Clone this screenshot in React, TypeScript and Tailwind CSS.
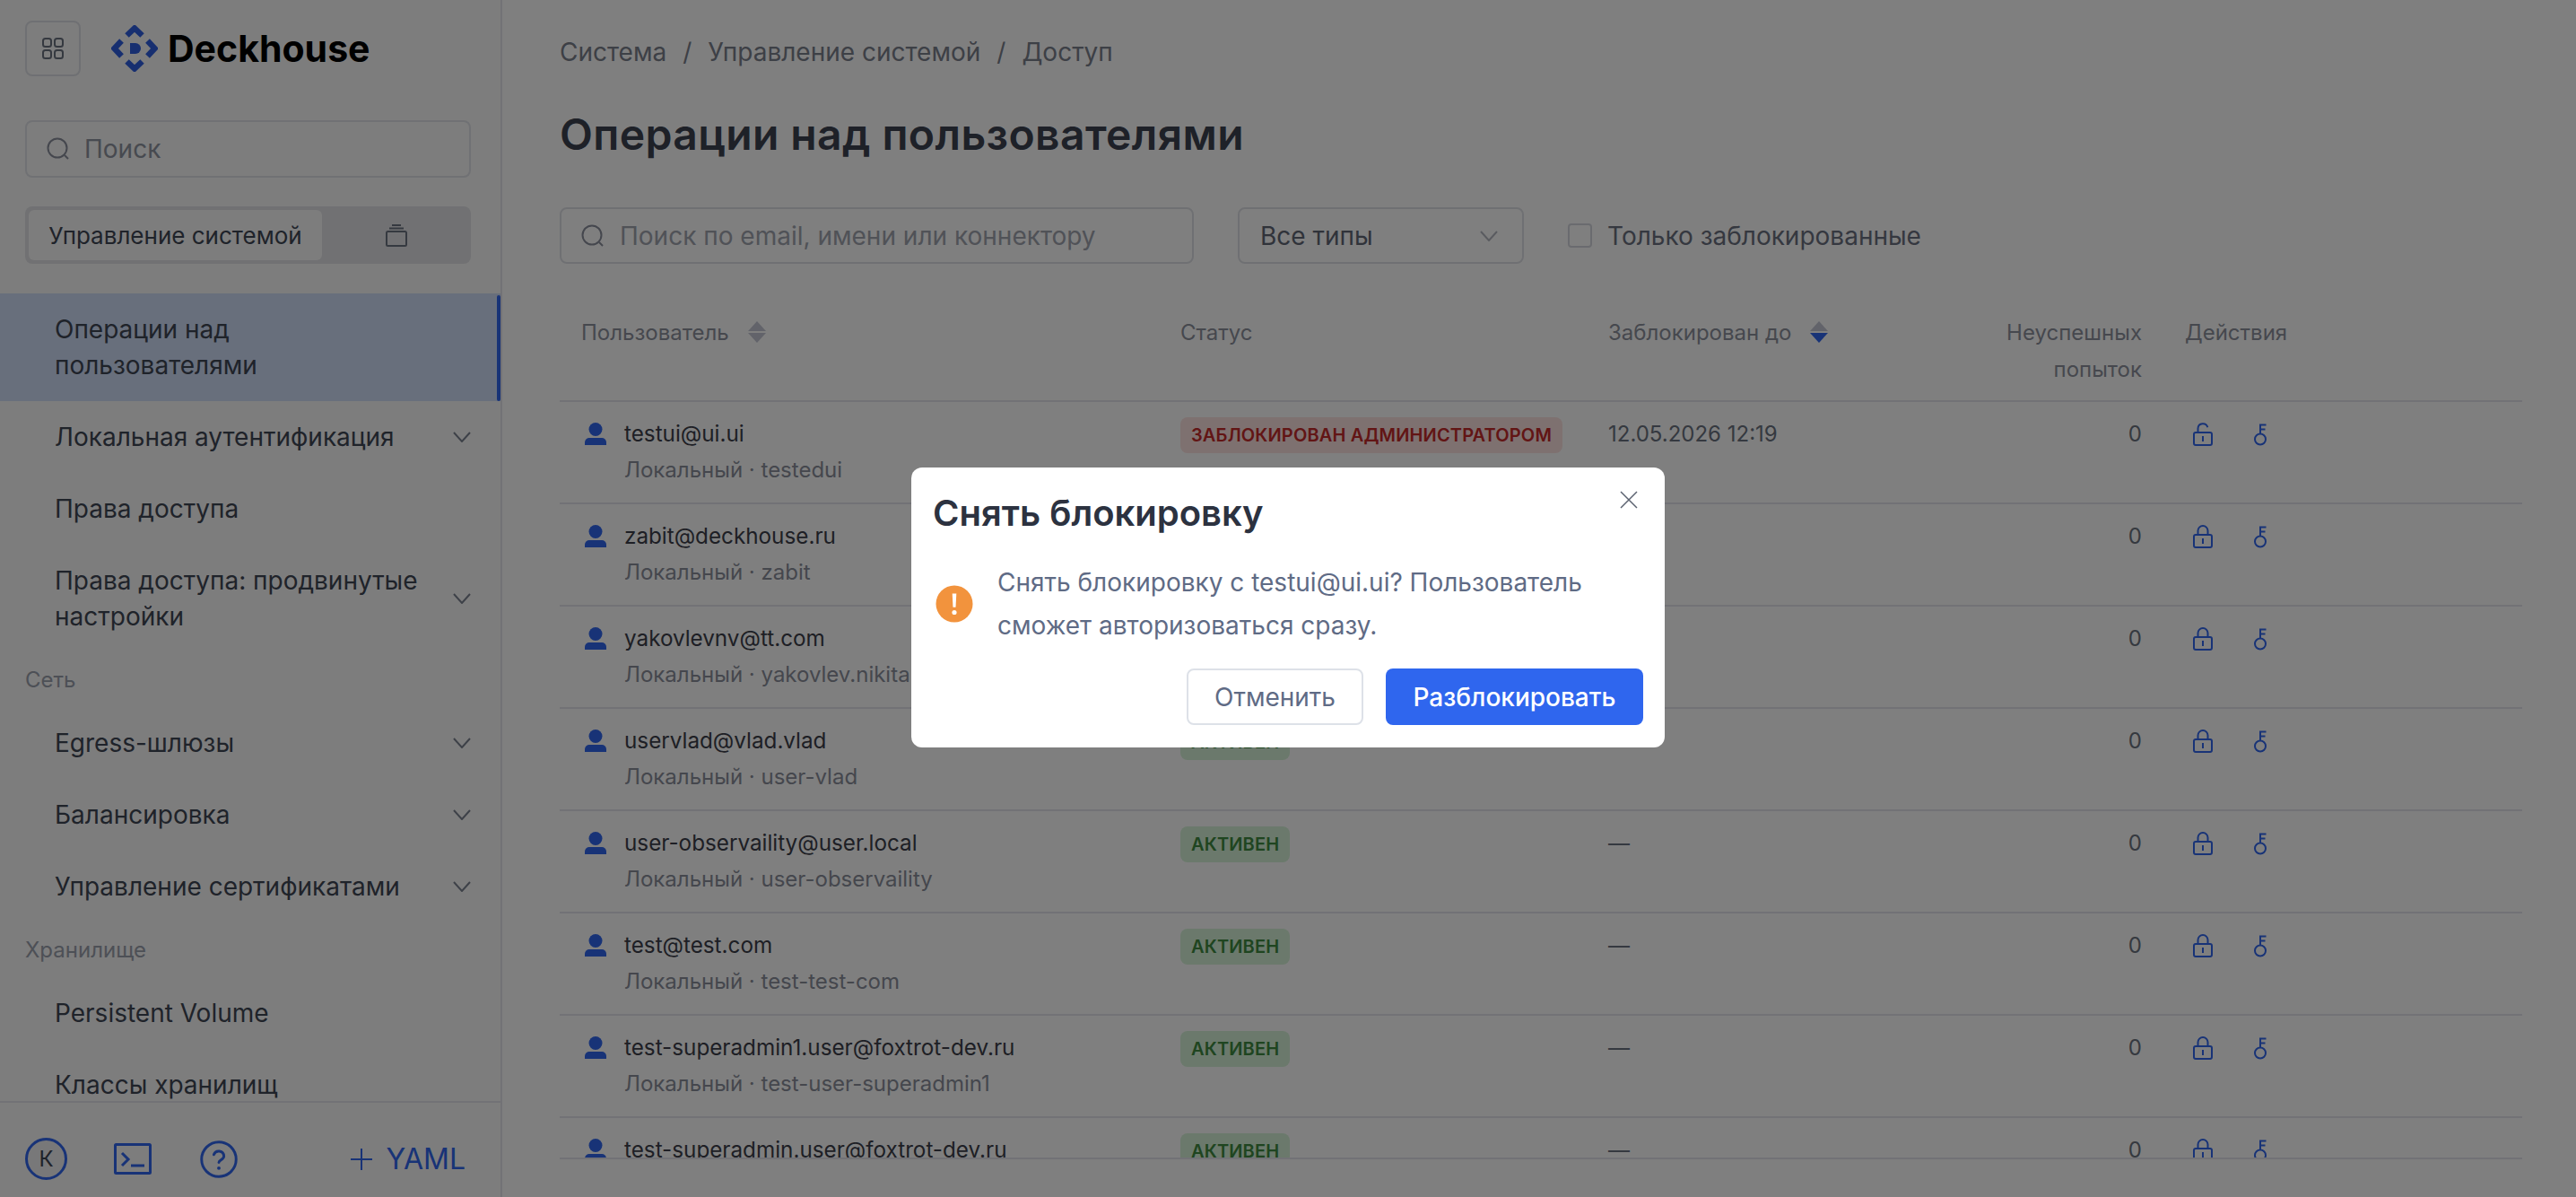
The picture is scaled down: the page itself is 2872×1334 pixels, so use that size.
import React from 'react'

const navItemClass = "flex items-center justify-between pl-[61px] pr-[33px] py-5 text-[28px] leading-[40px] text-[#3f4654]"

const Chevron = ({ className = "" }: { className?: string }) => (
  <svg width="20" height="12" viewBox="0 0 20 12" fill="none" stroke="currentColor" strokeWidth="2" className={className}>
    <path d="M1 1l9 10 9-10" />
  </svg>
)

const SearchIcon = () => (
  <svg width="26" height="26" viewBox="0 0 26 26" fill="none" stroke="#8a8f9c" strokeWidth="2" className="shrink-0">
    <circle cx="12" cy="12" r="10.5" />
    <path d="M20 20l4 4" />
  </svg>
)

const Logo = () => (
  <svg width="52" height="52" viewBox="0 0 52 52" fill="none" className="shrink-0">
    <g stroke="#2f5fe0" strokeWidth="6.5">
      <path d="M17.5 11.5L26 3.5l8.5 8" />
      <path d="M17.5 40.5L26 48.5l8.5-8" />
      <path d="M11.5 17.5L3.5 26l8 8.5" />
      <path d="M40.5 17.5L48.5 26l-8 8.5" />
    </g>
    <path d="M21 20h6a6 6 0 0 1 0 12h-6z" fill="#2f5fe0" />
  </svg>
)

const NavChild = ({ children, arrow }: { children: React.ReactNode; arrow?: boolean }) => (
  <div className={navItemClass}>
    <span>{children}</span>
    {arrow && <Chevron className="shrink-0 text-[#7b8290]" />}
  </div>
)

const Section = ({ children }: { children: React.ReactNode }) => (
  <div className="h-[61px] pl-[28px] flex items-center text-[24px] text-[#9aa0ad]">{children}</div>
)

const Sidebar = () => (
  <aside className="w-[560px] shrink-0 h-full flex flex-col bg-[#fafafa] border-r-2 border-[#e4e5ec]">
    <div className="flex items-center pl-[28px] pt-[23px]">
      <div className="w-[62px] h-[62px] rounded-lg border-2 border-[#dfe1e6] flex items-center justify-center">
        <svg width="24" height="24" viewBox="0 0 24 24" fill="none" stroke="#6b7280" strokeWidth="2">
          <rect x="1" y="1" width="9" height="9" rx="2.5" />
          <rect x="14" y="1" width="9" height="9" rx="2.5" />
          <rect x="1" y="14" width="9" height="9" rx="2.5" />
          <rect x="14" y="14" width="9" height="9" rx="2.5" />
        </svg>
      </div>
      <div className="ml-[34px] flex items-center gap-[11px]">
        <Logo />
        <span className="text-[41px] leading-none font-bold text-black">Deckhouse</span>
      </div>
    </div>
    <div className="ml-[28px] mr-[33px] mt-[49px] h-[64px] rounded-lg border-2 border-[#e0e2e8] flex items-center pl-[22px] gap-[16px] text-[28px] text-[#8f94a0]">
      <SearchIcon />
      <span>Поиск</span>
    </div>
    <div className="ml-[28px] mr-[33px] mt-[32px] h-[64px] rounded-lg bg-[#e2e3e6] flex items-center pl-[4px]">
      <div className="w-[327px] h-[56px] rounded-md bg-[#fafafa] flex items-center justify-center text-[26px] text-[#3f4654]">Управление системой</div>
      <div className="flex-1 flex items-center justify-center">
        <svg width="24" height="26" viewBox="0 0 24 26" fill="none" stroke="#6b7280" strokeWidth="2">
          <rect x="1" y="9" width="22" height="16" rx="1.5" />
          <path d="M4 5.5h16M7 2h10" />
        </svg>
      </div>
    </div>
    <div className="mt-[33px] flex-1 min-h-0 overflow-hidden">
      <div className="relative bg-[#d0def9] pl-[61px] pr-[30px] py-5 text-[28px] leading-[40px] text-[#3f4654]">
        Операции над<br />пользователями
        <div className="absolute right-0 top-[2px] bottom-0 w-[4px] rounded-sm bg-[#3066ee]" />
      </div>
      <NavChild arrow>Локальная аутентификация</NavChild>
      <NavChild>Права доступа</NavChild>
      <NavChild arrow>Права доступа: продвинутые<br />настройки</NavChild>
      <Section>Сеть</Section>
      <NavChild arrow>Egress-шлюзы</NavChild>
      <NavChild arrow>Балансировка</NavChild>
      <NavChild arrow>Управление сертификатами</NavChild>
      <Section>Хранилище</Section>
      <NavChild>Persistent Volume</NavChild>
      <NavChild>Классы хранилищ</NavChild>
    </div>
    <div className="h-[107px] shrink-0 border-t-2 border-[#e4e5ec] flex items-center pl-[28px] pr-[39px] pt-[20px]">
      <div className="w-[47px] h-[47px] rounded-full border-[3px] border-[#3066ee] bg-[#f0f0f3] flex items-center justify-center text-[24px] text-[#3f4654]">К</div>
      <svg width="42" height="35" viewBox="0 0 42 35" fill="none" stroke="#3066ee" strokeWidth="3" className="ml-[52px]">
        <rect x="1.5" y="1.5" width="39" height="32" rx="1" />
        <path d="M9 11l7 7-7 7M19 25h15" />
      </svg>
      <svg width="42" height="42" viewBox="0 0 24 24" fill="none" stroke="#3066ee" strokeWidth="1.7" strokeLinecap="round" className="ml-[54px]">
        <circle cx="12" cy="12" r="11" />
        <path d="M8.8 9a3.3 3.3 0 0 1 6.4 1c0 2.2-3.2 2.600-3.2 4" />
        <path d="M12 17.6h.01" strokeWidth="2.2" />
      </svg>
      <div className="ml-auto flex items-center gap-[15px] text-[32px] text-[#3066ee]">
        <svg width="26" height="26" viewBox="0 0 26 26" fill="none" stroke="currentColor" strokeWidth="2">
          <path d="M13 1v24M1 13h24" />
        </svg>
        <span>YAML</span>
      </div>
    </div>
  </aside>
)

const SortIcon = ({ active }: { active?: boolean }) => (
  <svg width="22" height="24" viewBox="0 0 22 24" className="shrink-0 ml-[20px]">
    <path d="M11 0l10 11H1z" fill="#c4c7d4" />
    <path d="M11 24L1 13h20z" fill={active ? "#3066ee" : "#c4c7d4"} />
  </svg>
)

const UserIcon = () => (
  <svg width="24" height="25" viewBox="0 0 24 25" fill="#3066ee" className="shrink-0 mt-[7px] ml-1">
    <ellipse cx="12" cy="7.5" rx="7.5" ry="7.5" />
    <path d="M0 25v-3a5 5 0 0 1 5-5h14a5 5 0 0 1 5 5v3z" />
  </svg>
)

const LockIcon = ({ open }: { open?: boolean }) => (
  <svg width="24" height="26" viewBox="0 0 24 26" fill="none" stroke="#3066ee" strokeWidth="2">
    <rect x="2" y="11" width="20" height="14" rx="2" />
    <path d="M12 15v6" />
    {open ? <path d="M6.5 11V6.5a5.5 5.5 0 0 1 10.8-1.2" /> : <path d="M6.5 11V6.5a5.5 5.5 0 0 1 11 0V11" />}
  </svg>
)

const KeyIcon = () => (
  <svg width="18" height="26" viewBox="0 0 18 26" fill="none" stroke="#3066ee" strokeWidth="2">
    <circle cx="8" cy="18.5" r="6" />
    <path d="M8 12.500V2M7 2.500h7.500M8 7.500h5.500" />
  </svg>
)

const Badge = ({ danger, children }: { danger?: boolean; children: React.ReactNode }) => (
  <span className={danger
    ? "inline-flex h-[40px] items-center px-3 rounded-lg bg-[#fde3e1] text-[#c42b2b] text-[20px] font-semibold tracking-[0.15px] uppercase whitespace-nowrap"
    : "inline-flex h-[40px] items-center px-3 rounded-lg bg-[#d6f3d8] text-[#3e8a40] text-[20px] font-semibold tracking-[0.15px] uppercase whitespace-nowrap"}>{children}</span>
)

const rows = [
  { email: "testui@ui.ui", sub: "Локальный · testedui", blocked: true },
  { email: "zabit@deckhouse.ru", sub: "Локальный · zabit" },
  { email: "yakovlevnv@tt.com", sub: "Локальный · yakovlev.nikita" },
  { email: "uservlad@vlad.vlad", sub: "Локальный · user-vlad" },
  { email: "user-observaility@user.local", sub: "Локальный · user-observaility" },
  { email: "test@test.com", sub: "Локальный · test-test-com" },
  { email: "test-superadmin1.user@foxtrot-dev.ru", sub: "Локальный · test-user-superadmin1" },
  { email: "test-superadmin.user@foxtrot-dev.ru", sub: "Локальный · test-superadmin" },
]

const gridCols = "grid grid-cols-[668px_477px_425px_218px_400px]"

const UsersTable = () => (
  <div className="mt-[39px] h-[959px] w-[2188px] overflow-hidden border-b-2 border-[#e4e5ec]">
    <div className={`${gridCols} border-b-2 border-[#e4e5ec] h-[115px] pt-[17px] text-[24px] leading-[41px] text-[#8c909c]`}>
      <div className="px-6 flex items-start"><span>Пользователь</span><span className="mt-[8px]"><SortIcon /></span></div>
      <div className="px-6">Статус</div>
      <div className="px-6 flex items-start"><span>Заблокирован до</span><span className="mt-[8px]"><SortIcon active /></span></div>
      <div className="px-6 text-right">Неуспешных попыток</div>
      <div className="px-6">Действия</div>
    </div>
    {rows.map((r) => (
      <div key={r.email} className={`${gridCols} h-[114px] border-b-2 border-[#e4e5ec] pt-[16px] text-[24px] leading-[40px]`}>
        <div className="px-6 flex gap-5">
          <UserIcon />
          <div>
            <div className="text-[24.25px] text-[#3c3f4a]">{r.email}</div>
            <div className="text-[#8a8e9b]">{r.sub}</div>
          </div>
        </div>
        <div className="px-6 self-start">
          {r.blocked ? <Badge danger>Заблокирован администратором</Badge> : <Badge>Активен</Badge>}
        </div>
        <div className="px-6 text-[#6b7280]">{r.blocked ? "12.05.2026 12:19" : "—"}</div>
        <div className="px-6 text-right text-[#6b7280]">0</div>
        <div className="pl-[32px] pt-[7px] flex items-start gap-[44px]">
          <LockIcon open={r.blocked} />
          <KeyIcon />
        </div>
      </div>
    ))}
  </div>
)

const Main = () => (
  <main className="flex-1 min-w-0 h-full pl-[64px] pt-[38px] overflow-hidden bg-white">
    <div className="flex items-center gap-[18px] text-[28px] leading-[40px] text-[#7b808c]">
      <span>Система</span><span>/</span><span>Управление системой</span><span>/</span><span>Доступ</span>
    </div>
    <h1 className="mt-[42px] text-[48px] leading-[60px] font-semibold tracking-[0.4px] text-[#3c4250]">Операции над пользователями</h1>
    <div className="mt-[51px] flex items-center">
      <div className="w-[707px] h-[63px] rounded-lg border-2 border-[#dfe1e6] flex items-center pl-[22px] gap-[17px] text-[28px] text-[#a0a4af]">
        <SearchIcon />
        <span>Поиск по email, имени или коннектору</span>
      </div>
      <div className="ml-[49px] w-[319px] h-[63px] rounded-lg border-2 border-[#dfe1e6] flex items-center justify-between pl-[23px] pr-[27px] text-[28px] text-[#616675]">
        <span>Все типы</span>
        <Chevron className="text-[#b4b7c0]" />
      </div>
      <div className="ml-[49px] flex items-center gap-[17px] text-[28px] text-[#6b7080]">
        <div className="w-[27px] h-[27px] rounded border-2 border-[#d5d7de]" />
        <span>Только заблокированные</span>
      </div>
    </div>
    <UsersTable />
  </main>
)

const UnblockDialog = () => (
  <div className="fixed inset-0 bg-black/50 z-10">
    <div className="absolute left-[1016px] top-[521px] w-[840px] h-[312px] rounded-xl bg-white px-[24px] pt-[29px] pb-[25px] flex flex-col">
      <svg width="20" height="20" viewBox="0 0 20 20" fill="none" stroke="#5b6270" strokeWidth="1.5" className="absolute right-[30px] top-[26px]">
        <path d="M1 1l18 18M19 1L1 19" />
      </svg>
      <h2 className="text-[40px] leading-[44px] font-semibold text-[#2c3240]">Снять блокировку</h2>
      <div className="mt-[31px] flex items-center gap-[27px]">
        <svg width="42" height="42" viewBox="0 0 44 44" className="shrink-0 ml-[3px]">
          <circle cx="22" cy="22" r="21.5" fill="#f2933d" />
          <path d="M19.6 10h4.800l-.8 16h-3.200z" fill="#fff" />
          <circle cx="22" cy="32" r="2.7" fill="#fff" />
        </svg>
        <p className="text-[28px] leading-[48px] text-[#5f6b85]">Снять блокировку с testui@ui.ui? Пользователь<br />сможет авторизоваться сразу.</p>
      </div>
      <div className="mt-auto flex justify-end gap-[25px]">
        <button className="w-[197px] h-[63px] rounded-lg border-2 border-[#dde1e8] bg-white text-[28px] text-[#5f6b85]">Отменить</button>
        <button className="w-[287px] h-[63px] rounded-lg bg-[#2f66ee] text-[28px] font-medium text-white">Разблокировать</button>
      </div>
    </div>
  </div>
)

const App = () => {
  return (
    <div className="h-screen flex overflow-hidden bg-white font-['Inter',sans-serif]">
      <Sidebar />
      <Main />
      <UnblockDialog />
    </div>
  )
}

export default App
